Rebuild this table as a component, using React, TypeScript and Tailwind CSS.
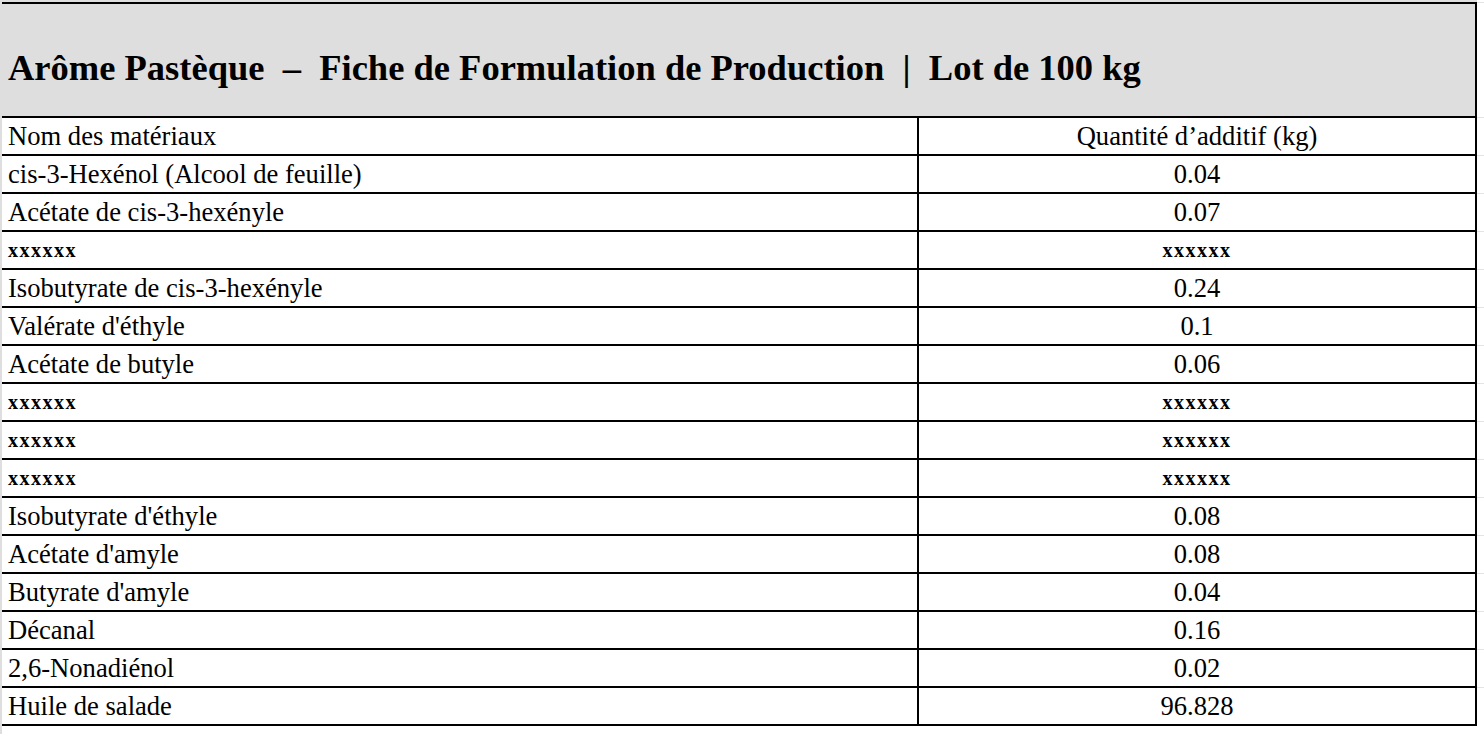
import React from "react";

const rows: [string, string][] = [
  ["cis-3-Hexénol (Alcool de feuille)", "0.04"],
  ["Acétate de cis-3-hexényle", "0.07"],
  ["xxxxxx", "xxxxxx"],
  ["Isobutyrate de cis-3-hexényle", "0.24"],
  ["Valérate d'éthyle", "0.1"],
  ["Acétate de butyle", "0.06"],
  ["xxxxxx", "xxxxxx"],
  ["xxxxxx", "xxxxxx"],
  ["xxxxxx", "xxxxxx"],
  ["Isobutyrate d'éthyle", "0.08"],
  ["Acétate d'amyle", "0.08"],
  ["Butyrate d'amyle", "0.04"],
  ["Décanal", "0.16"],
  ["2,6-Nonadiénol", "0.02"],
  ["Huile de salade", "96.828"],
];

function Cell({ text }: { text: string }) {
  const isX = text === "xxxxxx";
  return (
    <span
      className={
        isX
          ? "text-[20px] font-bold tracking-[1.5px] leading-none"
          : "text-[26.6px] leading-none"
      }
    >
      {text}
    </span>
  );
}

export default function App() {
  return (
    <div
      className="w-[1484px] h-[734px] bg-white flex text-black overflow-hidden"
      style={{ fontFamily: '"Liberation Serif", "Times New Roman", serif' }}
    >
      <div className="w-[2px] bg-[#dedede] self-stretch shrink-0" />
      <div className="flex flex-col w-[1482px] shrink-0">
        <div className="h-[2px] flex">
          <div className="w-[1475px] bg-[#dedede]" />
        </div>
        <div className="flex">
          <div className="w-[1475px] h-[114px] border-t-2 border-r-2 border-black bg-[#dedede] flex items-center pl-[6px] pt-[16px]">
            <span className="text-[36.5px] font-bold whitespace-pre leading-none">
              {"Arôme Pastèque  –  Fiche de Formulation de Production  |  Lot de 100 kg"}
            </span>
          </div>
          <div className="w-[7px] border-t border-[#e4e4e4]" />
        </div>
        {[["Nom des matériaux", "Quantité d’additif (kg)"] as [string, string], ...rows].map(
          ([a, b], i, arr) => (
            <div key={i} className="flex">
              <div
                className={
                  "w-[1475px] border-t-2 border-r-2 border-black flex " +
                  (i === arr.length - 1 ? "h-[40px] border-b-2" : "h-[38px]")
                }
              >
                <div className="w-[915px] flex items-center pl-[6px] shrink-0">
                  <Cell text={a} />
                </div>
                <div className="flex-1 border-l-2 border-black flex items-center justify-center">
                  <Cell text={b} />
                </div>
              </div>
              <div className="w-[7px] border-t border-[#e4e4e4] mt-[1px]" />
            </div>
          )
        )}
      </div>
    </div>
  );
}
